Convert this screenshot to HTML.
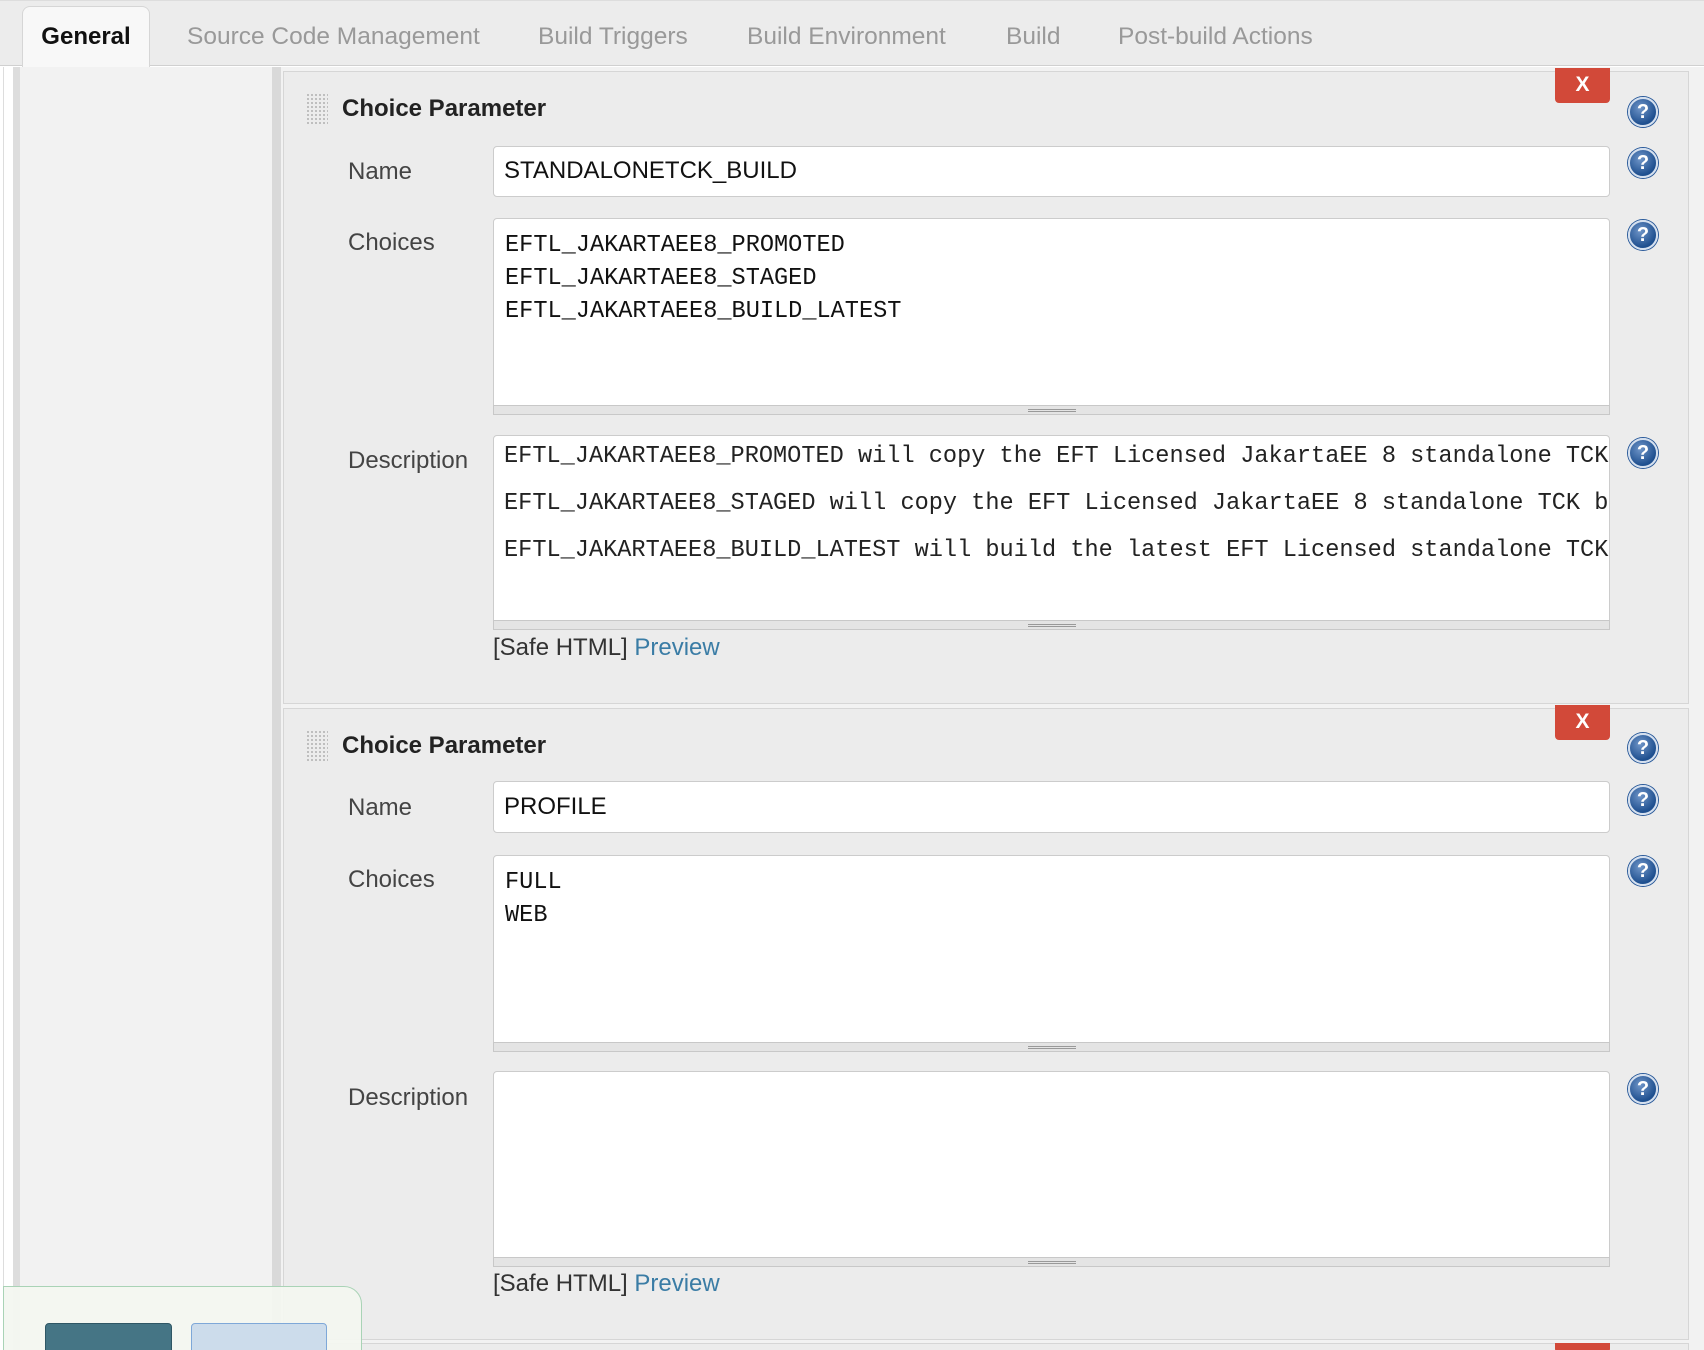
<!DOCTYPE html>
<html><head><meta charset="utf-8"><style>
*{box-sizing:border-box;margin:0;padding:0}
html,body{width:1704px;height:1350px;overflow:hidden}
body{background:#fff;font-family:"Liberation Sans",sans-serif;position:relative;color:#333}
.a{position:absolute}
.tabbar{left:0;top:0;width:1704px;height:66px;background:#ececec;border-bottom:1px solid #d0d0d0;border-top:1px solid #ddd}
.tab{top:0;font-size:24.5px;color:#999;line-height:74px;white-space:nowrap}
.gen{left:22px;top:6px;width:128px;height:61px;background:#f8f8f8;border:1px solid #d6d6d6;border-bottom:none;border-radius:8px 8px 0 0;font-weight:bold;color:#111;font-size:24px;text-align:center;line-height:60px}
.sec{left:283px;width:1406px;background:#ececec;border:1px solid #d6d6d6}
.x{width:55px;height:35px;background:#d24939;color:#fff;font-weight:bold;font-size:21px;text-align:center;line-height:33px;border-radius:0 0 4px 4px}
.help{width:30px;height:30px;border-radius:50%;background:radial-gradient(circle at 40% 35%,#6f95c8,#1e4f8f 70%);border:2px solid #d5e0ef;box-shadow:0 0 0 1px #2a5a9a;color:#fff;font-weight:bold;font-size:20px;text-align:center;line-height:26px}
.title{font-weight:bold;font-size:24px;color:#222}
.lbl{font-size:24px;color:#444}
.box{background:#fff;border:1px solid #ccc;border-radius:4px}
.mono{font-family:"Liberation Mono",monospace;font-size:23.6px;color:#111;line-height:33px}
.grip{height:10px;background:#e4e4e4;border:1px solid #c8c8c8}
.grip i{position:absolute;left:50%;top:3px;width:48px;margin-left:-24px;height:3px;border-top:1px solid #999;border-bottom:1px solid #999}
.handle{width:22px;height:32px;background-image:radial-gradient(#bbb 1px,transparent 1.2px);background-size:4px 4px}
.safe{font-size:24px;color:#333}
.safe span{color:#3a7ca5}
.desc{font-family:"Liberation Mono",monospace;font-size:23.6px;color:#222;white-space:nowrap;overflow:hidden;line-height:47px}
</style></head><body>
<div class="a tabbar"></div>
<div class="a gen">General</div>
<div class="a tab" style="left:187px">Source Code Management</div>
<div class="a tab" style="left:538px">Build Triggers</div>
<div class="a tab" style="left:747px">Build Environment</div>
<div class="a tab" style="left:1006px">Build</div>
<div class="a tab" style="left:1118px">Post-build Actions</div>

<div class="a" style="left:3px;top:67px;width:1px;height:1283px;background:#ddd"></div>
<div class="a" style="left:13px;top:67px;width:7px;height:1283px;background:#ddd"></div>
<div class="a" style="left:20px;top:67px;width:252px;height:1283px;background:#f2f2f2"></div>
<div class="a" style="left:272px;top:67px;width:9px;height:1283px;background:#d9d9d9"></div>
<div class="a" style="left:281px;top:67px;width:1423px;height:1283px;background:#f2f2f2"></div>

<!-- section 1 -->
<div class="a sec" style="top:71px;height:633px"></div>
<div class="a x" style="left:1555px;top:68px">X</div>
<div class="a help" style="left:1628px;top:97px">?</div>
<div class="a handle" style="left:306px;top:93px"></div>
<div class="a title" style="left:342px;top:95px">Choice Parameter</div>
<div class="a lbl" style="left:348px;top:158px">Name</div>
<div class="a box" style="left:493px;top:146px;width:1117px;height:51px"></div>
<div class="a" style="left:504px;top:157px;font-size:24px;color:#111">STANDALONETCK_BUILD</div>
<div class="a help" style="left:1628px;top:148px">?</div>
<div class="a lbl" style="left:348px;top:229px">Choices</div>
<div class="a box" style="left:493px;top:218px;width:1117px;height:188px;border-radius:4px 4px 0 0"></div>
<div class="a mono" style="left:505px;top:229px">EFTL_JAKARTAEE8_PROMOTED<br>EFTL_JAKARTAEE8_STAGED<br>EFTL_JAKARTAEE8_BUILD_LATEST</div>
<div class="a grip" style="left:493px;top:405px;width:1117px"><i></i></div>
<div class="a help" style="left:1628px;top:220px">?</div>
<div class="a lbl" style="left:348px;top:447px">Description</div>
<div class="a box" style="left:493px;top:435px;width:1117px;height:186px;border-radius:4px 4px 0 0"></div>
<div class="a desc" style="left:504px;top:433px;width:1105px">EFTL_JAKARTAEE8_PROMOTED will copy the EFT Licensed JakartaEE 8 standalone TCK bundle<br>EFTL_JAKARTAEE8_STAGED will copy the EFT Licensed JakartaEE 8 standalone TCK bundle<br>EFTL_JAKARTAEE8_BUILD_LATEST will build the latest EFT Licensed standalone TCK bundle</div>
<div class="a grip" style="left:493px;top:620px;width:1117px"><i></i></div>
<div class="a help" style="left:1628px;top:438px">?</div>
<div class="a safe" style="left:493px;top:634px">[Safe HTML] <span>Preview</span></div>

<!-- section 2 -->
<div class="a sec" style="top:708px;height:632px"></div>
<div class="a x" style="left:1555px;top:705px">X</div>
<div class="a help" style="left:1628px;top:733px">?</div>
<div class="a handle" style="left:306px;top:730px"></div>
<div class="a title" style="left:342px;top:732px">Choice Parameter</div>
<div class="a lbl" style="left:348px;top:794px">Name</div>
<div class="a box" style="left:493px;top:781px;width:1117px;height:52px"></div>
<div class="a" style="left:504px;top:793px;font-size:24px;color:#111">PROFILE</div>
<div class="a help" style="left:1628px;top:785px">?</div>
<div class="a lbl" style="left:348px;top:866px">Choices</div>
<div class="a box" style="left:493px;top:855px;width:1117px;height:188px;border-radius:4px 4px 0 0"></div>
<div class="a mono" style="left:505px;top:866px">FULL<br>WEB</div>
<div class="a grip" style="left:493px;top:1042px;width:1117px"><i></i></div>
<div class="a help" style="left:1628px;top:856px">?</div>
<div class="a lbl" style="left:348px;top:1084px">Description</div>
<div class="a box" style="left:493px;top:1071px;width:1117px;height:187px;border-radius:4px 4px 0 0"></div>
<div class="a grip" style="left:493px;top:1257px;width:1117px"><i></i></div>
<div class="a help" style="left:1628px;top:1074px">?</div>
<div class="a safe" style="left:493px;top:1270px">[Safe HTML] <span>Preview</span></div>

<div class="a sec" style="top:1343px;height:20px"></div>
<div class="a x" style="left:1555px;top:1343px;height:10px"></div>

<!-- bottom bar -->
<div class="a" style="left:3px;top:1286px;width:359px;height:80px;background:rgba(243,247,240,0.95);border:1px solid #a9d3b6;border-radius:0 18px 0 0"></div>
<div class="a" style="left:45px;top:1323px;width:127px;height:40px;background:#457585;border:1px solid #2f5765;border-radius:4px"></div>
<div class="a" style="left:191px;top:1323px;width:136px;height:40px;background:#ccdceb;border:1px solid #7ea8d8;border-radius:4px"></div>
</body></html>
